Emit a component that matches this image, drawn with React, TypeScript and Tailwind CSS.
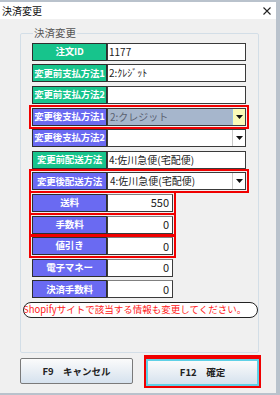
import React from "react";

type Row = {
    label: string;
    color: "green" | "blue";
    value?: string;
    kind: "text" | "combo" | "num";
    red?: boolean;
    active?: boolean;
};

const rows: Row[] = [
    { label: "注文ID", color: "green", value: "1177", kind: "text" },
    { label: "変更前支払方法1", color: "green", value: "2:ｸﾚｼﾞｯﾄ", kind: "text" },
    { label: "変更前支払方法2", color: "green", value: "", kind: "text" },
    { label: "変更後支払方法1", color: "blue", value: "2:クレジット", kind: "combo", red: true, active: true },
    { label: "変更後支払方法2", color: "blue", value: "", kind: "combo" },
    { label: "変更前配送方法", color: "green", value: "4:佐川急便(宅配便)", kind: "text" },
    { label: "変更後配送方法", color: "blue", value: "4:佐川急便(宅配便)", kind: "combo", red: true },
    { label: "送料", color: "blue", value: "550", kind: "num", red: true },
    { label: "手数料", color: "blue", value: "0", kind: "num", red: true },
    { label: "値引き", color: "blue", value: "0", kind: "num", red: true },
    { label: "電子マネー", color: "blue", value: "0", kind: "num" },
    { label: "決済手数料", color: "blue", value: "0", kind: "num" },
];

const font = { fontFamily: '"Noto Sans CJK JP", "Liberation Sans", sans-serif' };

const Arrow = () => (
    <svg width="7" height="4" viewBox="0 0 7 4">
        <path d="M0 0 H7 L3.5 4 Z" fill="#111" />
    </svg>
);

const FieldRow: React.FC<{ row: Row }> = ({ row }) => {
    const labelBg = row.color === "green" ? "bg-[#17c48c]" : "bg-[#6a6af2]";
    return (
        <div className="h-[21.6px] flex items-center">
            <div
                className={`flex h-[18px] ${
                    row.red ? "outline-2 outline-offset-1 outline-[#f00000]" : ""
                }`}
            >
                <div
                    className={`w-[75px] h-full ${labelBg} border border-[#2e2e2e] flex items-center justify-center text-white font-bold text-[9.5px] leading-none whitespace-nowrap tracking-[-0.2px]`}
                >
                    {row.label}
                </div>
                {row.kind === "num" ? (
                    <div className="w-[66px] h-full bg-white border border-[#3a3a3a] border-t-[#808080] flex items-center justify-end pr-[3px] text-[11px] text-[#222] leading-none">
                        {row.value}
                    </div>
                ) : row.kind === "combo" ? (
                    <div
                        className={`w-[139px] h-full border border-[#3a3a3a] flex items-center ${
                            row.active ? "bg-[#a6b6cc]" : "bg-white"
                        }`}
                    >
                        <span
                            className={`flex-1 pl-[2px] text-[10px] leading-none whitespace-nowrap ${
                                row.active ? "text-[#5a6070]" : "text-[#222]"
                            }`}
                        >
                            {row.value}
                        </span>
                        <div
                            className={`w-[13px] shrink-0 h-full flex items-center justify-center border-l ${
                                row.active
                                    ? "bg-[#fbfbb8] border-[#9ac0e0]"
                                    : "bg-white border-[#c8c8c8]"
                            }`}
                        >
                            <Arrow />
                        </div>
                    </div>
                ) : (
                    <div className="w-[139px] h-full bg-white border border-[#3a3a3a] flex items-center pl-[1px] text-[10px] text-[#222] leading-none whitespace-nowrap">
                        {row.value}
                    </div>
                )}
            </div>
        </div>
    );
};

const App: React.FC = () => {
    return (
        <div className="w-[280px] h-[395px] bg-[#b9c2cc] pt-[2px] pr-[4px] overflow-hidden" style={font}>
            <div className="w-[276px] h-[391px] bg-[#f0f0f0] flex flex-col">
                <div className="h-[17px] bg-white flex items-center justify-between pl-[2px] pr-[5px]">
                    <span className="text-[10px] text-[#111] leading-none">決済変更</span>
                    <svg width="8" height="8" viewBox="0 0 8 8">
                        <path d="M0.5 0.5 L7.5 7.5 M7.5 0.5 L0.5 7.5" stroke="#222" strokeWidth="1.1" />
                    </svg>
                </div>

                <fieldset className="ml-[20px] mt-[8px] w-[239px] h-[326px] border border-[#d3dee7] rounded-[2px] pl-[11px] pt-[2px]">
                    <legend className="ml-[1px] px-[1px] text-[10.5px] text-[#555] leading-[12px]">
                        決済変更
                    </legend>
                    <div className="flex flex-col">
                        {rows.map((row) => (
                            <FieldRow key={row.label} row={row} />
                        ))}
                    </div>
                    <div className="mt-[2px] -ml-[9px] w-[235px] h-[16px] rounded-full border border-[#222] bg-white overflow-hidden flex items-center">
                        <span className="-ml-[1px] text-[9.5px] text-[#ff2020] leading-none whitespace-nowrap">
                            Shopifyサイトで該当する情報も変更してください。
                        </span>
                    </div>
                </fieldset>

                <div className="flex items-center mt-[2px] pl-[20px]">
                    <button className="w-[113px] h-[26px] rounded-[2px] border border-[#7a7a7a] bg-gradient-to-b from-[#fbfbfb] to-[#d6e2ee] text-[9.5px] font-bold text-[#222]">
                        F9　キャンセル
                    </button>
                    <div className="ml-[11px] p-[2px] bg-[#f00000]">
                        <button className="w-[113px] h-[27px] border-2 border-[#5fd0e6] bg-gradient-to-b from-[#fbfbfb] to-[#d6e2ee] text-[9.5px] font-bold text-[#222]">
                            F12　確定
                        </button>
                    </div>
                </div>
            </div>
        </div>
    );
};

export default App;
